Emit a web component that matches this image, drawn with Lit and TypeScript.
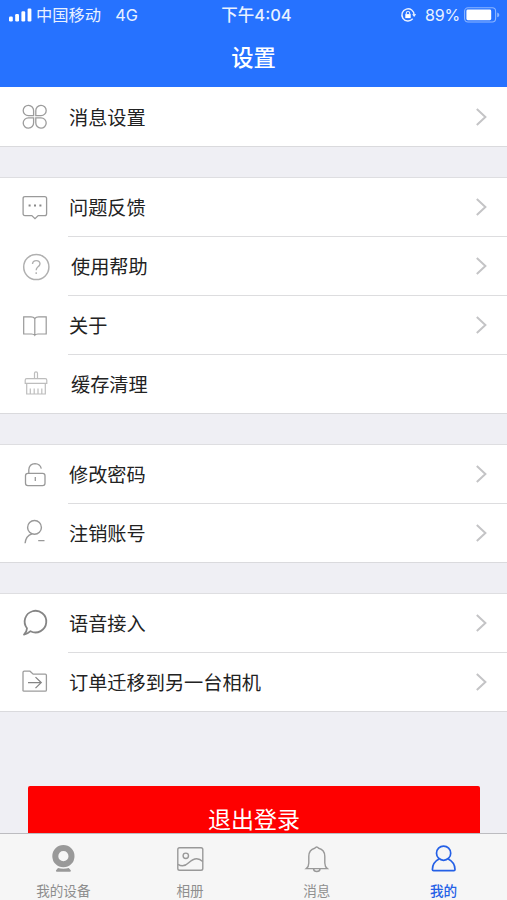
import { LitElement, html, css, svg, nothing } from "lit";
import { customElement } from "lit/decorators.js";

const ICONS: Record<string, unknown> = {
  clover: svg`<g stroke="#9c9c9c" stroke-width="1.3">
    <path d="M18.6 18.7V13.7A5.2 5.2 0 1 0 13.4 18.7Z"/>
    <path d="M20.8 18.7V13.7A5.2 5.2 0 1 1 26 18.7Z"/>
    <path d="M18.6 20.8V25.8A5.2 5.2 0 1 1 13.4 20.8Z"/>
    <path d="M20.8 20.8V25.8A5.2 5.2 0 1 0 26 20.8Z"/></g>`,
  message: svg`<path stroke="#9a9a9a" stroke-width="1.3" d="M10 8.6H29.7Q31.6 8.6 31.6 10.5V25.7Q31.6 27.6 29.7 27.6H23.2L20 30.7L16.8 27.6H10Q8.1 27.6 8.1 25.7V10.5Q8.1 8.6 10 8.6Z"/>
    <path stroke="#888" stroke-width="2" d="M13.6 17.6h2M19 17.6h2M24.4 17.6h2"/>`,
  help: svg`<circle cx="21.3" cy="20" r="12.6" stroke="#b0b0b0" stroke-width="1.5"/>
    <path stroke="#b0b0b0" stroke-width="1.4" d="M17.5 17Q17.8 13.6 21.3 13.6T25 16.8Q25 18.6 22.8 20Q21.2 21.2 21.2 23.2M21.2 25.3v1.8"/>`,
  book: svg`<path stroke="#999" stroke-width="1.2" d="M19.8 12.5Q18.5 10.9 16 10.9H8.7V28H16.5Q19 28 19.8 29.3Q20.6 28 23 28H31.2V10.9H23.7Q21.1 10.9 19.8 12.5V29.3"/>`,
  brush: svg`<g stroke="#bdbdbd" stroke-width="1.2"><path d="M19.5 14.5V9.2Q19.5 7.9 21 7.9T22.5 9.2V14.5"/>
    <path d="M10.2 19.3V16.2Q10.2 14.7 11.7 14.7H30.3Q31.8 14.7 31.8 16.2V19.3ZM11.7 19.3V30H30.3V19.3M15.3 30v-5.5M19.2 30v-5.5M23 30v-5.5M26.8 30v-5.5"/></g>`,
  lock: svg`<g stroke="#999" stroke-width="1.3"><rect x="10.5" y="18.4" width="19.5" height="12.2" rx="2.4"/>
    <path d="M13.8 18.4V14.8Q14.2 8.8 20 8.6Q25.2 8.8 26.3 13.6M20.3 22v4"/></g>`,
  person: svg`<g stroke="#999" stroke-width="1.4"><circle cx="19.5" cy="14.4" r="6.9"/>
    <path d="M10.1 30.3Q10.9 22.6 17 20.9M23.2 27.6h6.3"/></g>`,
  bubble: svg`<path stroke="#858585" stroke-width="1.8" stroke-linejoin="round" d="M15.5 27.2A10.8 10.8 0 1 0 12 24.3Q12 27.5 9 30.6Q12.5 30 15.5 27.2Z"/>`,
  folder: svg`<path stroke="#9c9c9c" stroke-width="1.3" d="M8 29V10.5Q8 9.2 9.3 9.2H15L18.2 12.2H30.3Q31.4 12.2 31.4 13.4V28Q31.4 29.2 30.2 29.2H9Q8 29.2 8 28Z"/>
    <path stroke="#858585" stroke-width="1.3" d="M13 20.6H26M20.5 15.1L26.2 20.6L20.5 26.1"/>`,
  camera: svg`<circle cx="20.4" cy="16.2" r="8.1" stroke="#999" stroke-width="6"/>
    <path fill="#999" stroke="none" d="M15 28Q20.4 29.6 25.8 28L27.9 30.6Q27.9 31.8 26.9 31.8H13.9Q12.9 31.8 12.9 30.6Z"/>`,
  album: svg`<g stroke="#999" stroke-width="1.4"><rect x="7.8" y="7.7" width="25" height="22.6" rx="1.8"/>
    <circle cx="15.8" cy="15.8" r="2.7"/><path d="M8 24.3Q13.5 28 19 22.5Q26.5 15.4 32.7 21.5"/></g>`,
  bell: svg`<path stroke="#999" stroke-width="1.4" d="M9.3 28.6Q11.8 26.6 11.8 23V16.3Q11.9 9.8 17.7 8.3Q19.7 5.7 21.7 8.3Q27.7 9.8 27.8 16.3V23Q27.8 26.6 30.3 28.6ZM16.5 28.8Q16.8 31.5 19.8 31.5T23.1 28.8"/>`,
  mine: svg`<g stroke="#2460e6" stroke-width="1.7"><circle cx="19.6" cy="13.2" r="7.1"/>
    <path d="M15 19Q8.4 22.4 8.4 29.6Q8.4 30.7 9.6 30.7H29.9Q31 30.7 31 29.6Q31 22.4 24.2 19"/></g>`,
};

const icon = (name: string) =>
  html`<svg class="icon" viewBox="0 0 40 40" fill="none">${ICONS[name]}</svg>`;

interface Item { icon: string; label: string; shift?: boolean; plain?: boolean }

const GROUPS: Item[][] = [
  [{ icon: "clover", label: "消息设置" }],
  [
    { icon: "message", label: "问题反馈" },
    { icon: "help", label: "使用帮助", shift: true },
    { icon: "book", label: "关于" },
    { icon: "brush", label: "缓存清理", shift: true, plain: true },
  ],
  [
    { icon: "lock", label: "修改密码" },
    { icon: "person", label: "注销账号" },
  ],
  [
    { icon: "bubble", label: "语音接入" },
    { icon: "folder", label: "订单迁移到另一台相机" },
  ],
];

const TABS = [
  { icon: "camera", label: "我的设备" },
  { icon: "album", label: "相册" },
  { icon: "bell", label: "消息" },
  { icon: "mine", label: "我的", active: true },
];

@customElement("app-root")
export class AppRoot extends LitElement {
  static styles = css`
    :host {
      display: flex; flex-direction: column; height: 900px; overflow: hidden;
      background: #efeff4; color: #222;
      font-family: Inter, "Noto Sans CJK SC", sans-serif;
    }
    * { box-sizing: border-box; }
    svg { display: block; flex: none; }
    .header { height: 87px; flex: none; background: #2672ff; color: #fff; }
    .status {
      height: 30px; display: grid; grid-template-columns: 1fr auto 1fr;
      align-items: center; font-size: 16.3px; line-height: 30px; white-space: nowrap;
      color: #e9f1ff;
    }
    .left, .right { display: flex; align-items: center; }
    .left { padding-left: 9px; }
    .signal { margin-right: 4px; }
    .net { margin-left: 14px; }
    .time { font-weight: 500; font-size: 16.5px; padding-left: 6px; }
    .right { justify-content: flex-end; padding-right: 7px; }
    .pct { margin: 0 4px 0 9px; font-size: 16px; letter-spacing: -0.2px; }
    .title { height: 56px; line-height: 56px; text-align: center; font-size: 22.3px; font-weight: 500; }
    .content { flex: 1; min-height: 0; overflow: hidden; }
    .group { background: #fff; border-bottom: 1px solid #dadadd; margin-bottom: 31px; }
    .group + .group { box-shadow: 0 -1px 0 #dedee1; }
    .row { display: flex; height: 59px; padding-left: 15px; align-items: center; }
    .icon { width: 40px; height: 40px; }
    .cell {
      flex: 1; height: 100%; margin-left: 13px; padding-right: 19px; display: flex;
      align-items: center; justify-content: space-between;
      border-bottom: 1px solid #dddddf; font-size: 19.2px;
    }
    .row:last-child:not(:first-child) { height: 58px; }
    .row:last-child .cell { border-bottom: none; }
    .label { padding-left: 1px; }
    .shift { padding-left: 3px; }
    .logout {
      height: 68px; margin: 74px 27px 0 28px; padding-top: 22px;
      background: #fe0000; color: #fff; border-radius: 2px;
      font-size: 23px; line-height: 24px; text-align: center;
    }
    .tabs {
      height: 67px; flex: none; display: grid; grid-template-columns: repeat(4, 1fr);
      background: #f6f6f6; border-top: 1px solid #bcbcc0;
    }
    .tab {
      display: flex; flex-direction: column; align-items: center; padding-top: 6px;
      color: #8e8e8e; font-size: 13.6px; line-height: 20px;
    }
    .tab .text { margin-top: 1px; }
    .active { color: #2460e6; font-weight: 500; }
  `;

  render() {
    return html`
      <div class="header">
        <div class="status">
          <div class="left">
            <svg class="signal" width="23" height="14" fill="#fff">
              <rect x="0" y="8.5" width="3.8" height="5" rx="1.2" /><rect x="6.2" y="6" width="3.8" height="7.5" rx="1.2" />
              <rect x="12.4" y="3.3" width="3.8" height="10.2" rx="1.2" /><rect x="18.6" y="0.5" width="3.8" height="13" rx="1.2" />
            </svg>
            <span>中国移动</span><span class="net">4G</span>
          </div>
          <div class="time">下午4:04</div>
          <div class="right">
            <svg width="16" height="16" fill="none" stroke="#e9f1ff" stroke-width="1.4">
              <path d="M12.7 11.8A6.1 6.1 0 1 1 14.1 8" /><path d="M12.1 7.3h4L14.1 10z" fill="#e9f1ff" stroke="none" />
              <rect x="5.3" y="7.1" width="5.4" height="4" fill="#fff" stroke="none" /><path d="M6.3 7.5V6.2a1.7 1.7 0 0 1 3.4 0V7.5" stroke-width="1.1" />
            </svg>
            <span class="pct">89%</span>
            <svg width="36" height="16" fill="none">
              <rect x="0.6" y="0.8" width="31" height="14.2" rx="3.4" stroke="#8db6ff" stroke-width="1.1" />
              <rect x="2.4" y="2.6" width="24.8" height="10.6" rx="1.4" fill="#fff" />
              <path d="M33.2 5.6Q35.4 6.2 35.4 7.9T33.2 10.2Z" fill="#8db6ff" />
            </svg>
          </div>
        </div>
        <div class="title">设置</div>
      </div>
      <div class="content">
        ${GROUPS.map((g) => html`<div class="group">${g.map((i) => html`
          <div class="row">
            ${icon(i.icon)}
            <div class="cell">
              <span class="label ${i.shift ? "shift" : ""}">${i.label}</span>
              ${i.plain ? nothing : html`<svg width="14" height="20" fill="none" stroke="#c4c4c6" stroke-width="2"><path d="M2.8 2L11.4 10L2.8 18" /></svg>`}
            </div>
          </div>`)}</div>`)}
        <div class="logout">退出登录</div>
      </div>
      <div class="tabs">
        ${TABS.map((t) => html`<div class="tab ${t.active ? "active" : ""}">${icon(t.icon)}<span class="text">${t.label}</span></div>`)}
      </div>
    `;
  }
}
